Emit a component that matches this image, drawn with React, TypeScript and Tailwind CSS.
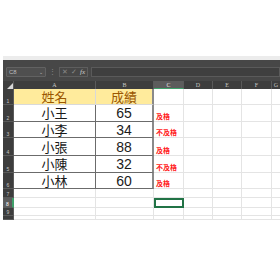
const cols = ["A", "B", "C", "D", "E", "F", "G"];
const colW = ["w-[82px]", "w-[58px]", "w-[30px]", "w-[29px]", "w-[29px]", "w-[30px]", "w-[9px]"];

const rows: { h: string; n: string; name?: string; score?: string; c?: string }[] = [
  { h: "h-[16px]", n: "1", name: "姓名", score: "成績" },
  { h: "h-[17px]", n: "2", name: "小王", score: "65", c: "及格" },
  { h: "h-[16px]", n: "3", name: "小李", score: "34", c: "不及格" },
  { h: "h-[18px]", n: "4", name: "小張", score: "88", c: "及格" },
  { h: "h-[17px]", n: "5", name: "小陳", score: "32", c: "不及格" },
  { h: "h-[16px]", n: "6", name: "小林", score: "60", c: "及格" },
  { h: "h-[9px]", n: "7" },
  { h: "h-[10px]", n: "8" },
  { h: "h-[8px]", n: "9" },
  { h: "h-[4px]", n: "10" },
];

const cjk = "font-['Noto_Sans_CJK_TC','Noto_Sans',sans-serif]";

function HeaderRow() {
  return (
    <div className="flex h-[8px] bg-[#3d3d3d]">
      <div className="w-[11px] shrink-0 border-r border-[#5a5a5a] flex items-end justify-end">
        <div className="w-0 h-0 border-l-[6px] border-l-transparent border-b-[6px] border-b-[#d8d8d8]" />
      </div>
      {cols.map((c, i) => (
        <div
          key={c}
          className={`${colW[i]} shrink-0 flex items-center justify-center text-[6px] leading-none font-['Liberation_Serif',serif] border-r border-[#5a5a5a] ${
            c === "C" ? "bg-[#5c5c5c] text-[#e8e8e8] border-b border-b-[#3fa06a]" : "text-[#c4c4c4]"
          }`}
        >
          {c}
        </div>
      ))}
    </div>
  );
}

function Row({ r }: { r: (typeof rows)[number] }) {
  const sel = r.n === "8";
  const table = !!r.name;
  const head = r.n === "1";
  return (
    <div className={`flex ${r.h} shrink-0`}>
      <div
        className={`w-[11px] shrink-0 overflow-hidden flex items-end justify-center text-[5px] leading-[6px] font-['Liberation_Sans',sans-serif] border-b border-[#5a5a5a] ${
          sel ? "bg-[#5c5c5c] text-white border-r-2 border-r-[#3fa06a]" : "bg-[#3d3d3d] text-[#c4c4c4] border-r border-r-[#5a5a5a]"
        }`}
      >
        {r.n !== "10" && r.n}
      </div>
      <div
        className={`w-[82px] shrink-0 flex items-center justify-center text-[13px] leading-[12px] ${cjk} ${
          table
            ? head
              ? "bg-[#ffeb9c] text-[#9c5700] border-r border-b border-[#d9d9d9]"
              : "bg-white text-[#1a1a1a] border-r border-b border-[#6b6b6b]"
            : "border-r border-b border-[#e4e4e4]"
        }`}
      >
        {r.name}
      </div>
      <div
        className={`w-[58px] shrink-0 flex items-center justify-center leading-[12px] ${
          head ? `${cjk} text-[13px]` : "font-['Liberation_Sans',sans-serif] text-[14px]"
        } ${
          table
            ? head
              ? "bg-[#ffeb9c] text-[#9c5700] border-r-2 border-b border-r-[#8a8a8a] border-b-[#d9d9d9]"
              : "bg-white text-[#1a1a1a] border-r-2 border-b border-r-[#8a8a8a] border-b-[#6b6b6b]"
            : "border-r border-b border-[#e4e4e4]"
        }`}
      >
        {r.score}
      </div>
      <div
        className={`w-[30px] shrink-0 flex items-end pl-[2px] pb-[1px] text-[7px] leading-[7px] font-semibold text-[#ff1a1a] ${cjk} ${
          sel ? "border-2 border-[#217346]" : "border-r border-b border-[#e4e4e4]"
        }`}
      >
        {r.c}
      </div>
      {colW.slice(3).map((w, i) => (
        <div key={i} className={`${w} shrink-0 border-r border-b border-[#e4e4e4]`} />
      ))}
    </div>
  );
}

export default function App() {
  return (
    <div className="w-[280px] h-[280px] bg-white overflow-hidden flex flex-col pt-[56px]">
      <div className="h-[4px] ml-[3px] bg-[#ececec]" />
      <div className="ml-[3px] flex flex-col">
        <div className="h-[21px] bg-[#474747] flex items-start pt-[7px] pl-[3px] gap-[3px]">
          <div className="w-[40px] h-[10px] bg-[#4f4f4f] border border-[#626262] rounded-[1px] flex items-center justify-between px-[2px] text-[6px] leading-none text-[#bdbdbd] font-['Liberation_Sans',sans-serif]">
            <span>C8</span>
            <span className="text-[5px]">⌄</span>
          </div>
          <span className="text-[7px] leading-[10px] text-[#8a8a8a]">⋮</span>
          <div className="h-[10px] flex items-center gap-[3px] text-[7px] leading-none text-[#8a8a8a] font-['Liberation_Serif',serif] border border-[#5e5e5e] px-[2px]">
            <span>✕</span>
            <span>✓</span>
            <span className="italic text-[#cfcfcf]">fx</span>
          </div>
          <div className="flex-1 h-[10px] bg-[#3f3f3f] border border-[#5a5a5a]" />
        </div>
        <HeaderRow />
        {rows.map((r) => (
          <Row key={r.n} r={r} />
        ))}
      </div>
    </div>
  );
}
